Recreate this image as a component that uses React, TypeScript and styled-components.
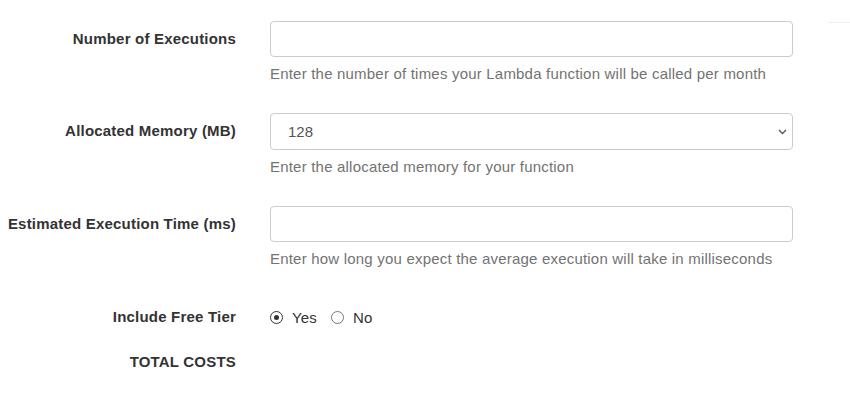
import React, { useState } from 'react'
import styled, { createGlobalStyle } from 'styled-components'

const GlobalStyle = createGlobalStyle`
  html, body {
    margin: 0;
    padding: 0;
    background: #fff;
  }
  body {
    font-family: "Liberation Sans", Arial, sans-serif;
    font-size: 15px;
    letter-spacing: 0.2px;
    color: #333;
  }
`

const Page = styled.div`
  display: flex;
  width: 850px;
  height: 416px;
  overflow: hidden;
`

const Form = styled.form`
  display: grid;
  grid-template-columns: 236px 523px;
  column-gap: 34px;
  align-content: start;
  padding-top: 21px;
`

const Aside = styled.div`
  margin-left: 35px;
  margin-top: 22px;
  width: 22px;
  height: 0;
  border-top: 1px solid #eee;
`

const Label = styled.label<{ $space: number }>`
  box-sizing: border-box;
  display: flex;
  align-items: center;
  justify-content: flex-end;
  height: ${({ $space }) => $space}px;
  padding-bottom: 2px;
  font-weight: bold;
  text-align: right;
  white-space: nowrap;
`

const Field = styled.div<{ $after: number }>`
  display: flex;
  flex-direction: column;
  margin-bottom: ${({ $after }) => $after}px;
`

const Input = styled.input`
  box-sizing: border-box;
  width: 100%;
  height: 36px;
  padding: 6px 12px;
  border: 1px solid #ccc;
  border-radius: 4px;
  background: #fff;
  font: inherit;
  color: #555;
  outline: none;
`

const SelectWrap = styled.div`
  position: relative;
`

const Select = styled.select`
  box-sizing: border-box;
  width: 100%;
  height: 37px;
  padding: 6px 12px 6px 17px;
  border: 1px solid #ccc;
  border-radius: 4px;
  background: #fff;
  font: inherit;
  color: #555;
  appearance: none;
  outline: none;
`

const Chevron = styled.svg`
  position: absolute;
  right: 6px;
  top: 16px;
  pointer-events: none;
`

const Help = styled.span`
  display: block;
  margin-top: 7px;
  line-height: 20px;
  color: #737373;
  white-space: nowrap;
`

const Radios = styled.div`
  display: flex;
  align-items: center;
  height: 20px;
  gap: 14px;
`

const RadioLabel = styled.label`
  display: flex;
  align-items: center;
  gap: 9px;
  color: #333;
  cursor: pointer;
`

const RadioDot = styled.span<{ $on: boolean }>`
  box-sizing: border-box;
  width: 13px;
  height: 13px;
  border-radius: 50%;
  border: 1px solid ${({ $on }) => ($on ? '#333' : '#767676')};
  display: flex;
  align-items: center;
  justify-content: center;
  &::after {
    content: '';
    width: 5px;
    height: 5px;
    border-radius: 50%;
    background: #333;
    display: ${({ $on }) => ($on ? 'block' : 'none')};
  }
`

const Hidden = styled.input`
  display: none;
`

const App = () => {
  const [freeTier, setFreeTier] = useState<'yes' | 'no'>('yes')

  return (
    <Page>
      <GlobalStyle />
      <Form>
        <Label $space={36}>Number of Executions</Label>
        <Field $after={29}>
          <Input type="text" />
          <Help>Enter the number of times your Lambda function will be called per month</Help>
        </Field>

        <Label $space={37}>Allocated Memory (MB)</Label>
        <Field $after={29}>
          <SelectWrap>
            <Select defaultValue="128">
              {[128, 256, 512, 1024, 1536, 2048, 3008].map((m) => (
                <option key={m} value={m}>{m}</option>
              ))}
            </Select>
            <Chevron width="9" height="6" viewBox="0 0 9 6">
              <path d="M1 1 L4.5 4.5 L8 1" fill="none" stroke="#555" strokeWidth="1.4" />
            </Chevron>
          </SelectWrap>
          <Help>Enter the allocated memory for your function</Help>
        </Field>

        <Label $space={36}>Estimated Execution Time (ms)</Label>
        <Field $after={38}>
          <Input type="text" />
          <Help>Enter how long you expect the average execution will take in milliseconds</Help>
        </Field>

        <Label $space={20}>Include Free Tier</Label>
        <Field $after={25}>
          <Radios>
            <RadioLabel>
              <Hidden type="radio" name="free" checked={freeTier === 'yes'} onChange={() => setFreeTier('yes')} />
              <RadioDot $on={freeTier === 'yes'} />
              Yes
            </RadioLabel>
            <RadioLabel>
              <Hidden type="radio" name="free" checked={freeTier === 'no'} onChange={() => setFreeTier('no')} />
              <RadioDot $on={freeTier === 'no'} />
              No
            </RadioLabel>
          </Radios>
        </Field>

        <Label $space={20}>TOTAL COSTS</Label>
        <Field $after={0} />
      </Form>
      <Aside />
    </Page>
  )
}

export default App
